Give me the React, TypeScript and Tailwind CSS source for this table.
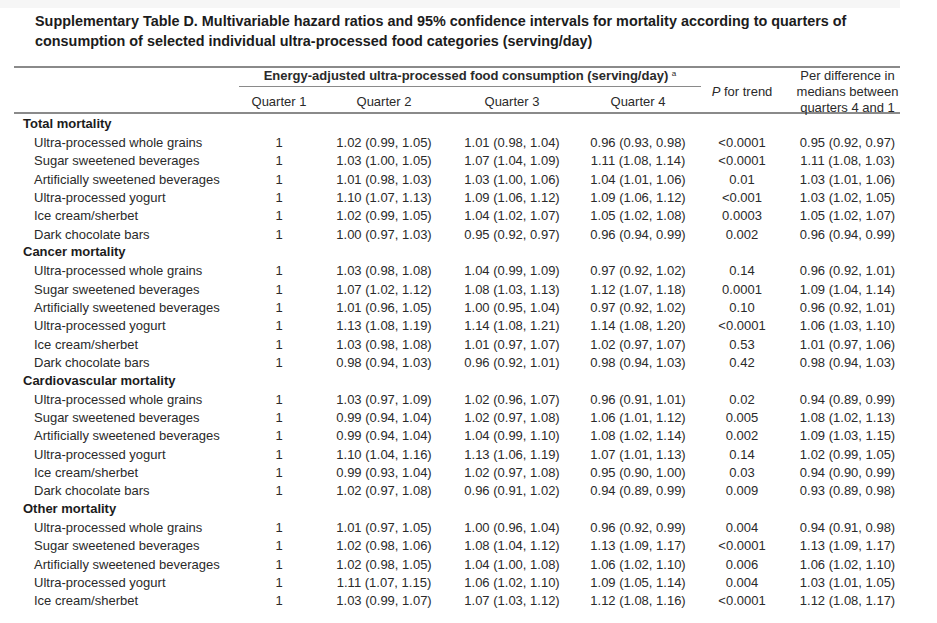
import React from "react";

type Row = { label: string; values: string[] };
type Section = { title: string; rows: Row[] };

const items = [
  "Ultra-processed whole grains",
  "Sugar sweetened beverages",
  "Artificially sweetened beverages",
  "Ultra-processed yogurt",
  "Ice cream/sherbet",
  "Dark chocolate bars",
];

const mk = (data: string[][]): Row[] =>
  data.map((v, i) => ({ label: items[i], values: ["1", ...v] }));

const sections: Section[] = [
  {
    title: "Total mortality",
    rows: mk([
      ["1.02 (0.99, 1.05)", "1.01 (0.98, 1.04)", "0.96 (0.93, 0.98)", "<0.0001", "0.95 (0.92, 0.97)"],
      ["1.03 (1.00, 1.05)", "1.07 (1.04, 1.09)", "1.11 (1.08, 1.14)", "<0.0001", "1.11 (1.08, 1.03)"],
      ["1.01 (0.98, 1.03)", "1.03 (1.00, 1.06)", "1.04 (1.01, 1.06)", "0.01", "1.03 (1.01, 1.06)"],
      ["1.10 (1.07, 1.13)", "1.09 (1.06, 1.12)", "1.09 (1.06, 1.12)", "<0.001", "1.03 (1.02, 1.05)"],
      ["1.02 (0.99, 1.05)", "1.04 (1.02, 1.07)", "1.05 (1.02, 1.08)", "0.0003", "1.05 (1.02, 1.07)"],
      ["1.00 (0.97, 1.03)", "0.95 (0.92, 0.97)", "0.96 (0.94, 0.99)", "0.002", "0.96 (0.94, 0.99)"],
    ]),
  },
  {
    title: "Cancer mortality",
    rows: mk([
      ["1.03 (0.98, 1.08)", "1.04 (0.99, 1.09)", "0.97 (0.92, 1.02)", "0.14", "0.96 (0.92, 1.01)"],
      ["1.07 (1.02, 1.12)", "1.08 (1.03, 1.13)", "1.12 (1.07, 1.18)", "0.0001", "1.09 (1.04, 1.14)"],
      ["1.01 (0.96, 1.05)", "1.00 (0.95, 1.04)", "0.97 (0.92, 1.02)", "0.10", "0.96 (0.92, 1.01)"],
      ["1.13 (1.08, 1.19)", "1.14 (1.08, 1.21)", "1.14 (1.08, 1.20)", "<0.0001", "1.06 (1.03, 1.10)"],
      ["1.03 (0.98, 1.08)", "1.01 (0.97, 1.07)", "1.02 (0.97, 1.07)", "0.53", "1.01 (0.97, 1.06)"],
      ["0.98 (0.94, 1.03)", "0.96 (0.92, 1.01)", "0.98 (0.94, 1.03)", "0.42", "0.98 (0.94, 1.03)"],
    ]),
  },
  {
    title: "Cardiovascular mortality",
    rows: mk([
      ["1.03 (0.97, 1.09)", "1.02 (0.96, 1.07)", "0.96 (0.91, 1.01)", "0.02", "0.94 (0.89, 0.99)"],
      ["0.99 (0.94, 1.04)", "1.02 (0.97, 1.08)", "1.06 (1.01, 1.12)", "0.005", "1.08 (1.02, 1.13)"],
      ["0.99 (0.94, 1.04)", "1.04 (0.99, 1.10)", "1.08 (1.02, 1.14)", "0.002", "1.09 (1.03, 1.15)"],
      ["1.10 (1.04, 1.16)", "1.13 (1.06, 1.19)", "1.07 (1.01, 1.13)", "0.14", "1.02 (0.99, 1.05)"],
      ["0.99 (0.93, 1.04)", "1.02 (0.97, 1.08)", "0.95 (0.90, 1.00)", "0.03", "0.94 (0.90, 0.99)"],
      ["1.02 (0.97, 1.08)", "0.96 (0.91, 1.02)", "0.94 (0.89, 0.99)", "0.009", "0.93 (0.89, 0.98)"],
    ]),
  },
  {
    title: "Other mortality",
    rows: mk([
      ["1.01 (0.97, 1.05)", "1.00 (0.96, 1.04)", "0.96 (0.92, 0.99)", "0.004", "0.94 (0.91, 0.98)"],
      ["1.02 (0.98, 1.06)", "1.08 (1.04, 1.12)", "1.13 (1.09, 1.17)", "<0.0001", "1.13 (1.09, 1.17)"],
      ["1.02 (0.98, 1.05)", "1.04 (1.00, 1.08)", "1.06 (1.02, 1.10)", "0.006", "1.06 (1.02, 1.10)"],
      ["1.11 (1.07, 1.15)", "1.06 (1.02, 1.10)", "1.09 (1.05, 1.14)", "0.004", "1.03 (1.01, 1.05)"],
      ["1.03 (0.99, 1.07)", "1.07 (1.03, 1.12)", "1.12 (1.08, 1.16)", "<0.0001", "1.12 (1.08, 1.17)"],
    ]),
  },
];

const cols = "grid grid-cols-[225px_80px_130px_126px_126px_82px_117px]";

export default function App() {
  return (
    <div className="w-[937px] h-[623px] overflow-hidden bg-white font-['Liberation_Sans',Arial,sans-serif] text-[#2a2a2a]">
      <div className="h-[8px] w-[900px] bg-[#f6f6f6]" />
      <div className="pl-[35px] pt-[3px] text-[14.4px] leading-[20px] font-bold text-[#1c1c1c]">
        <p>Supplementary Table D. Multivariable hazard ratios and 95% confidence intervals for mortality according to quarters of</p>
        <p>consumption of selected individual ultra-processed food categories (serving/day)</p>
      </div>

      <div className="ml-[14px] mt-[15px] w-[886px] text-[13px]">
        <div className="h-[2px] bg-[#8a8a8a]" />
        <div className={`${cols} grid-rows-[19px_25px]`}>
          <div className="row-span-2" />
          <div className="col-span-4 border-b-[1.5px] border-[#8a8a8a] text-center font-bold leading-[15px]">
            Energy-adjusted ultra-processed food consumption (serving/day){" "}
            <sup className="text-[8px] font-normal">a</sup>
          </div>
          <div className="row-span-2 flex items-center justify-center pt-[4px]">
            <span>
              <i>P</i> for trend
            </span>
          </div>
          <div className="row-span-2 pl-[12px] text-center leading-[16px]">
            Per difference in
            <br />
            medians between
            <br />
            quarters 4 and 1
          </div>
          <div className="pt-[5px] text-center">Quarter 1</div>
          <div className="pt-[5px] text-center">Quarter 2</div>
          <div className="pt-[5px] text-center">Quarter 3</div>
          <div className="pt-[5px] text-center">Quarter 4</div>
        </div>
        <div className="h-[2px] bg-[#8a8a8a]" />

        <div className="pt-[0.5px]">
          {sections.map((s) => (
            <div key={s.title}>
              <div className="flex h-[18.35px] items-center pl-[9px] font-bold text-[#1c1c1c]">
                {s.title}
              </div>
              {s.rows.map((r) => (
                <div key={s.title + r.label} className={`${cols} h-[18.35px] items-center`}>
                  <div className="pl-[20px] whitespace-nowrap">{r.label}</div>
                  {r.values.map((v, i) => (
                    <div key={i} className={`text-center whitespace-nowrap ${i === 5 ? "pl-[12px]" : ""}`}>
                      {v}
                    </div>
                  ))}
                </div>
              ))}
            </div>
          ))}
        </div>
      </div>
    </div>
  );
}
